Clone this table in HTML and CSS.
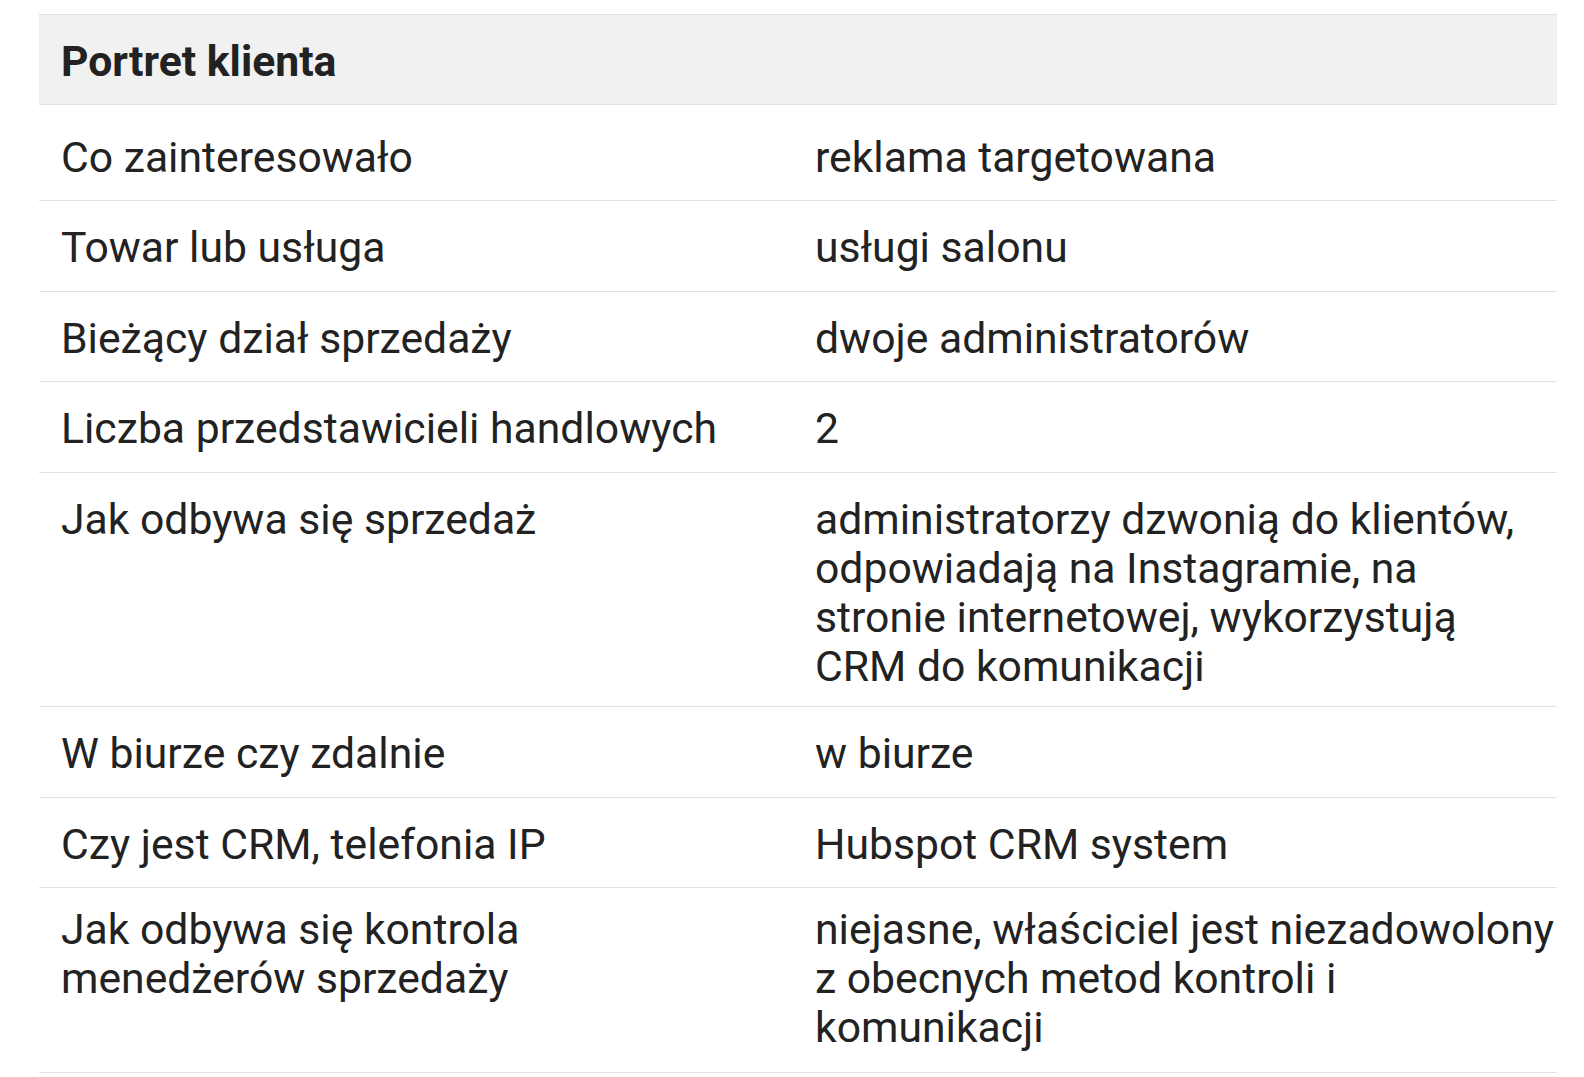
FILE: index.html
```html
<!DOCTYPE html>
<html lang="pl">
<head>
<meta charset="utf-8">
<title>Portret klienta</title>
<link rel="stylesheet" href="styles.css">
</head>
<body>
<div class="table">
  <div class="row head">
    <div class="cell">Portret klienta</div>
    <div class="cell"></div>
  </div>
  <div class="row first">
    <div class="cell">Co zainteresowało</div>
    <div class="cell">reklama targetowana</div>
  </div>
  <div class="row">
    <div class="cell">Towar lub usługa</div>
    <div class="cell">usługi salonu</div>
  </div>
  <div class="row">
    <div class="cell">Bieżący dział sprzedaży</div>
    <div class="cell">dwoje administratorów</div>
  </div>
  <div class="row">
    <div class="cell">Liczba przedstawicieli handlowych</div>
    <div class="cell">2</div>
  </div>
  <div class="row">
    <div class="cell">Jak odbywa się sprzedaż</div>
    <div class="cell">administratorzy dzwonią do klientów, odpowiadają na Instagramie, na stronie internetowej, wykorzystują CRM do komunikacji</div>
  </div>
  <div class="row">
    <div class="cell">W biurze czy zdalnie</div>
    <div class="cell">w biurze</div>
  </div>
  <div class="row">
    <div class="cell">Czy jest CRM, telefonia IP</div>
    <div class="cell">Hubspot CRM system</div>
  </div>
  <div class="row last">
    <div class="cell">Jak odbywa się kontrola menedżerów sprzedaży</div>
    <div class="cell">niejasne, właściciel jest niezadowolony z obecnych metod kontroli i komunikacji</div>
  </div>
</div>
</body>
</html>
```

FILE: styles.css
```css
html, body {
  margin: 0;
  padding: 0;
  background: #ffffff;
}

body {
  font-family: Roboto, "Noto Sans", "Liberation Sans", sans-serif;
  font-size: 42.7px;
  line-height: 49px;
  color: #222222;
}

.table {
  margin: 14px 0 0 39px;
  width: 1518px;
}

.row {
  display: grid;
  grid-template-columns: 754px 1fr;
  min-height: 90.7px;
  box-sizing: border-box;
  border-bottom: 1px solid #e2e2e2;
}

.cell {
  padding: 22px 0 15px 22px;
}

.row .cell:first-child {
  padding-right: 62px;
}

.head {
  background: #f1f1f1;
  border-top: 1px solid #e2e2e2;
  font-weight: 700;
  min-height: 91px;
}

.first {
  min-height: 96px;
}

.first .cell {
  padding-top: 28px;
}

.last .cell {
  padding-top: 17px;
  padding-bottom: 20px;
}
```
